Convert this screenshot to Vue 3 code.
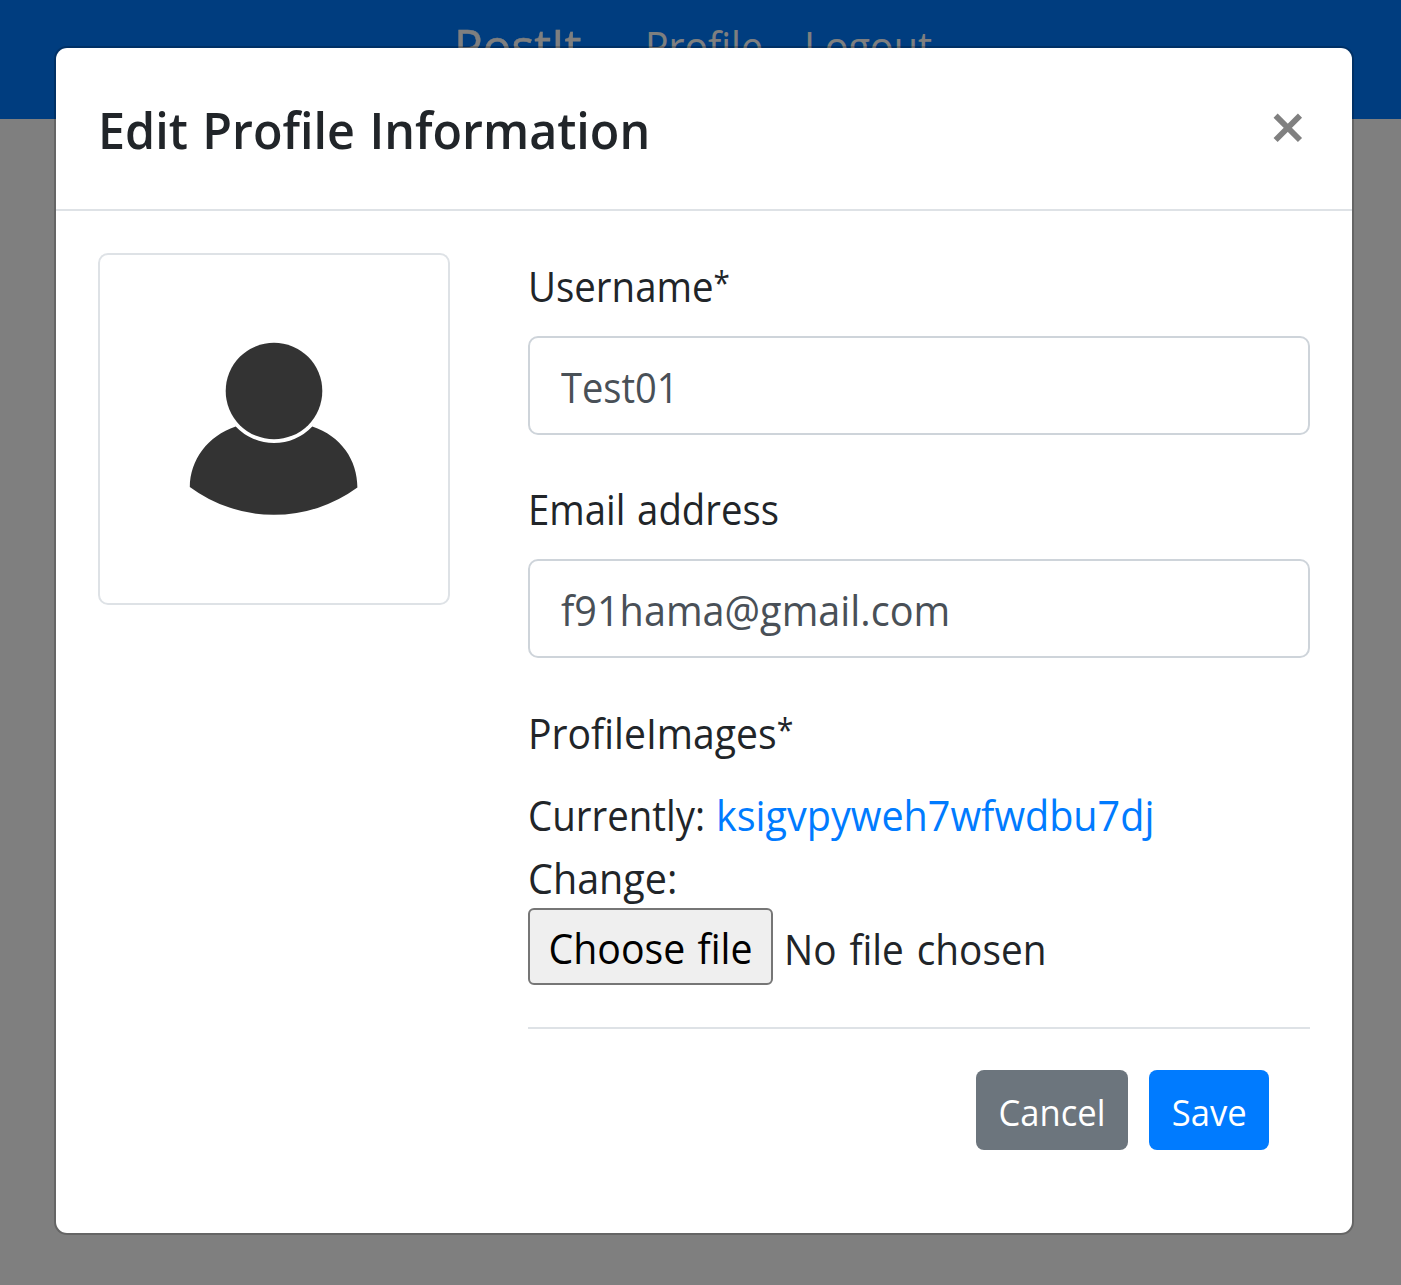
<script setup>
import { ref } from 'vue'

const username = ref('Test01')
const email = ref('f91hama@gmail.com')
</script>

<template>
  <div class="page">
    <nav class="navbar">
      <div class="brand"><span class="text">PostIt</span></div>
      <div class="nav-profile"><span class="text">Profile</span></div>
      <div class="nav-logout"><span class="text">Logout</span></div>
    </nav>

    <div class="backdrop">
      <section class="modal" role="dialog">
        <header class="modal-header">
          <h5 class="title"><span class="text">Edit Profile Information</span></h5>
          <button class="close" type="button" aria-label="Close">
            <svg width="30" height="30" viewBox="0 0 30 30">
              <path d="M2.6 2.6L27 27M27 2.6L2.6 27" stroke="#808080" stroke-width="5.8" />
            </svg>
          </button>
        </header>

        <div class="modal-body">
          <div class="thumbnail">
            <svg width="348" height="348" viewBox="100 255 348 348" fill="#333">
              <circle cx="274" cy="391" r="48.3" />
              <path d="M235.7 426.5A52.6 52.6 0 0 0 312.3 426.5C341 436 357.4 460 357.4 487.6A141.3 141.3 0 0 1 189.8 487C190 460 207.5 436 235.7 426.5Z" />
            </svg>
          </div>

          <form class="form" @submit.prevent>
            <label class="label"><span class="text narrow">Username<span class="star">*</span></span></label>
            <div class="input"><input v-model="username" class="field field-name" type="text" /></div>
            <label class="label second"><span class="text narrow address">Email address</span></label>
            <div class="input"><input v-model="email" class="field" type="text" /></div>
            <label class="label third"><span class="text narrow images">ProfileImages<span class="star">*</span></span></label>
            <div class="current">
              <div class="currently"><span class="text narrow">Currently:</span></div>
              <a class="link"><span class="text">ksigvpyweh7wfwdbu7dj</span></a>
            </div>
            <div class="change"><span class="text">Change:</span></div>
            <div class="file">
              <button class="choose" type="button"><span class="text">Choose file</span></button>
              <div class="no-file"><span class="text">No file chosen</span></div>
            </div>
            <footer class="footer">
              <button class="btn cancel" type="button"><span class="text">Cancel</span></button>
              <button class="btn save" type="submit"><span class="text">Save</span></button>
            </footer>
          </form>
        </div>
      </section>
    </div>
  </div>
</template>

<style>
body {
  margin: 0;
  background: #808080;
}
</style>

<style scoped>
* {
  box-sizing: border-box;
}
.page {
  position: relative;
  width: 1401px;
  height: 1285px;
  overflow: hidden;
  background: #fff;
  color: #212529;
  font: 400 41.4px/62px 'Open Sans', 'Noto Sans', sans-serif;
  white-space: nowrap;
}
.text {
  display: inline-block;
  transform: scaleX(0.955);
  transform-origin: left center;
}
.narrow {
  transform: scaleX(0.928);
}
.address {
  word-spacing: 2px;
  transform: scaleX(0.925);
}
.images {
  transform: scaleX(0.945);
}
.star {
  font-size: 32px;
  line-height: 1;
  vertical-align: 7px;
}
.navbar {
  display: flex;
  align-items: flex-start;
  height: 119px;
  padding: 15px 0 0 454px;
  background: #007bff;
  color: #fff;
}
.brand {
  width: 191px;
  font-size: 50px;
}
.brand .text {
  -webkit-text-stroke: 0.4px #fff;
}
.nav-profile {
  width: 159px;
}
.nav-profile .text {
  transform: scaleX(0.945);
}
.backdrop {
  position: absolute;
  inset: 0;
  padding: 46px 47px 50px 54px;
  background: rgba(0, 0, 0, 0.5);
}
.modal {
  width: 1300px;
  height: 1189px;
  border: 2px solid rgba(0, 0, 0, 0.2);
  border-radius: 13px;
  background: #fff;
  background-clip: padding-box;
}
.modal-header {
  display: flex;
  justify-content: space-between;
  height: 163px;
  padding: 43px 49px 0 42px;
  border-bottom: 2px solid #dee2e6;
}
.title {
  margin: 0;
  font-size: 50.6px;
  font-weight: 600;
  line-height: 78px;
}
.title .text {
  word-spacing: 2px;
  transform: scaleX(0.957);
}
.close {
  width: 30px;
  height: 30px;
  margin: 22px 0 0;
  padding: 0;
  border: 0;
  background: none;
}
.close svg {
  display: block;
}
.modal-body {
  display: flex;
  gap: 78px;
  padding: 42px 42px 0;
}
.thumbnail {
  width: 352px;
  height: 352px;
  border: 2px solid #dee2e6;
  border-radius: 10px;
}
.thumbnail svg {
  display: block;
}
.form {
  display: flex;
  flex-direction: column;
  width: 782px;
}
.label {
  height: 83px;
  padding-top: 2px;
}
.second {
  margin-top: 41px;
}
.third {
  margin-top: 43px;
  padding-top: 1px;
}
.input {
  width: 782px;
  height: 99px;
  padding: 3px 30px 0 31px;
  border: 2px solid #ced4da;
  border-radius: 10px;
}
.field {
  display: block;
  width: 100%;
  height: 91px;
  padding: 0;
  border: 0;
  outline: 0;
  background: transparent;
  color: #495057;
  font: inherit;
  transform: scaleX(0.957);
  transform-origin: left center;
}
.field-name {
  transform: scaleX(0.92);
}
.current {
  display: flex;
  height: 62px;
}
.currently {
  width: 188px;
}
.link {
  color: #007bff;
}
.change {
  height: 62px;
  padding-top: 1px;
}
.file {
  display: flex;
  height: 77px;
}
.choose {
  width: 245px;
  height: 77px;
  padding: 2px 0 0;
  border: 2px solid #767676;
  border-radius: 6px;
  background: #efefef;
  color: #000;
  font: inherit;
}
.choose .text,
.btn .text {
  transform-origin: center;
}
.choose .text {
  word-spacing: 2px;
  transform: scaleX(0.948);
}
.no-file {
  margin-left: 11px;
  padding-top: 10px;
}
.no-file .text {
  word-spacing: 3px;
  transform: scaleX(0.937);
}
.footer {
  display: flex;
  justify-content: flex-end;
  gap: 21px;
  margin-top: 42px;
  padding: 41px 41px 0 0;
  border-top: 2px solid #dee2e6;
}
.btn {
  height: 80px;
  padding: 4px 0 0;
  border: 0;
  border-radius: 8px;
  color: #fff;
  font: inherit;
  font-size: 36.2px;
}
.cancel {
  width: 152px;
  background: #6c757d;
}
.save {
  width: 120px;
  background: #007bff;
}
</style>
